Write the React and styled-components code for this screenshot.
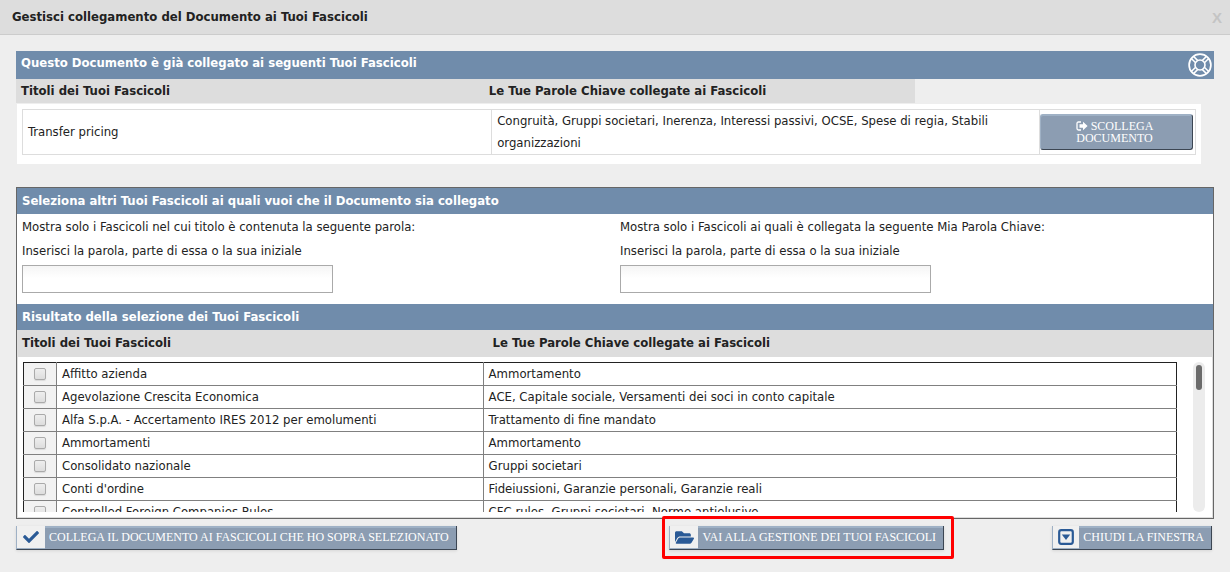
import React, { useState } from 'react';
import styled, { createGlobalStyle } from 'styled-components';
import { FaCheck, FaFolderOpen } from 'react-icons/fa';

const folders = [
    { title: "Affitto azienda", keywords: "Ammortamento" },
    { title: "Agevolazione Crescita Economica", keywords: "ACE, Capitale sociale, Versamenti dei soci in conto capitale" },
    { title: "Alfa S.p.A. - Accertamento IRES 2012 per emolumenti", keywords: "Trattamento di fine mandato" },
    { title: "Ammortamenti", keywords: "Ammortamento" },
    { title: "Consolidato nazionale", keywords: "Gruppi societari" },
    { title: "Conti d'ordine", keywords: "Fideiussioni, Garanzie personali, Garanzie reali" },
    { title: "Controlled Foreign Companies Rules", keywords: "CFC rules, Gruppi societari, Norme antielusive" },
];

const LifeRing = () => (
    <svg width="24" height="24" viewBox="0 0 24 24" fill="none" stroke="#fff" aria-hidden="true">
        <circle cx="12" cy="12" r="10.9" strokeWidth="1.7" />
        <circle cx="12" cy="12" r="5" strokeWidth="1.6" />
        <path strokeWidth="1.5" d="M5.8 3.6l4 4M3.6 5.8l4 4M18.2 3.6l-4 4M20.4 5.8l-4 4M5.8 20.4l4-4M3.6 18.2l4-4M18.2 20.4l-4-4M20.4 18.2l-4-4" />
    </svg>
);

const SignOut = () => (
    <svg width="12" height="10" viewBox="0 0 12 10" aria-hidden="true">
        <path d="M5 1H2.5Q1 1 1 2.5v5Q1 9 2.5 9H5" fill="none" stroke="currentColor" strokeWidth="1.3" />
        <path d="M3.5 3.3H7V.8L11.6 5 7 9.2V6.7H3.5z" fill="currentColor" />
    </svg>
);

const CaretSquare = () => (
    <svg width="16" height="16" viewBox="0 0 16 16" aria-hidden="true">
        <rect x="1.2" y="1.2" width="13.6" height="13.6" rx="2" fill="none" stroke="currentColor" strokeWidth="2.2" />
        <path d="M3.8 5.4h8.4L8 11z" fill="currentColor" />
    </svg>
);

const App = () => {

    const [checked, setChecked] = useState({});

    const toggle = (title) => setChecked({ ...checked, [title]: !checked[title] });

    return(
        <>
            <GlobalStyle />

            <TitleBar>
                <Title>Gestisci collegamento del Documento ai Tuoi Fascicoli</Title>
                <Close type="button" aria-label="Chiudi">X</Close>
            </TitleBar>

            <Content>

                <section>
                    <LinkedBar>
                        <Heading>Questo Documento è già collegato ai seguenti Tuoi Fascicoli</Heading>
                        <Help type="button" aria-label="Aiuto"><LifeRing /></Help>
                    </LinkedBar>
                    <LinkedHead>
                        <span>Titoli dei Tuoi Fascicoli</span>
                        <span>Le Tue Parole Chiave collegate ai Fascicoli</span>
                    </LinkedHead>
                    <LinkedBox>
                        <LinkedTable>
                            <TitleCol />
                            <col />
                            <ButtonCol />
                            <tbody>
                                <tr>
                                    <td>Transfer pricing</td>
                                    <td>Congruità, Gruppi societari, Inerenza, Interessi passivi, OCSE, Spese di regia, Stabili organizzazioni</td>
                                    <td>
                                        <Unlink type="button"><SignOut /> SCOLLEGA<br />DOCUMENTO</Unlink>
                                    </td>
                                </tr>
                            </tbody>
                        </LinkedTable>
                    </LinkedBox>
                </section>

                <Panel>
                    <Bar><Heading>Seleziona altri Tuoi Fascicoli ai quali vuoi che il Documento sia collegato</Heading></Bar>
                    <Filters>
                        <Filter>
                            <p>Mostra solo i Fascicoli nel cui titolo è contenuta la seguente parola:</p>
                            <label htmlFor="by-title">Inserisci la parola, parte di essa o la sua iniziale</label>
                            <input id="by-title" type="text" />
                        </Filter>
                        <Filter>
                            <p>Mostra solo i Fascicoli ai quali è collegata la seguente Mia Parola Chiave:</p>
                            <label htmlFor="by-keyword">Inserisci la parola, parte di essa o la sua iniziale</label>
                            <input id="by-keyword" type="text" />
                        </Filter>
                    </Filters>
                    <Bar><Heading>Risultato della selezione dei Tuoi Fascicoli</Heading></Bar>
                    <ResultHead>
                        <span>Titoli dei Tuoi Fascicoli</span>
                        <span>Le Tue Parole Chiave collegate ai Fascicoli</span>
                    </ResultHead>
                    <Results>
                        <Viewport>
                            <ResultTable>
                                <CheckCol />
                                <FolderCol />
                                <col />
                                <tbody>
                                    {folders.map((f) => (
                                        <tr key={f.title}>
                                            <td>
                                                <Check
                                                    aria-label={f.title}
                                                    checked={!!checked[f.title]}
                                                    onChange={() => toggle(f.title)}
                                                />
                                            </td>
                                            <td>{f.title}</td>
                                            <td>{f.keywords}</td>
                                        </tr>
                                    ))}
                                </tbody>
                            </ResultTable>
                        </Viewport>
                        <Track><Thumb /></Track>
                    </Results>
                </Panel>

                <Actions>
                    <div>
                        <Action type="button">
                            <IconCell $width="28px"><FaCheck /></IconCell>
                            <span>COLLEGA IL DOCUMENTO AI FASCICOLI CHE HO SOPRA SELEZIONATO</span>
                        </Action>
                    </div>
                    <ActionsRight>
                        <Highlight>
                            <Action type="button">
                                <IconCell $width="28px"><FaFolderOpen size={19} /></IconCell>
                                <span>VAI ALLA GESTIONE DEI TUOI FASCICOLI</span>
                            </Action>
                        </Highlight>
                        <Action type="button">
                            <IconCell $width="26px"><CaretSquare /></IconCell>
                            <span>CHIUDI LA FINESTRA</span>
                        </Action>
                    </ActionsRight>
                </Actions>

            </Content>
        </>
    );

};

export default App;

const fontStack = `"DejaVu Sans Condensed", "DejaVu Sans", sans-serif`;

const GlobalStyle = createGlobalStyle`

    * {
        box-sizing: border-box;
    }
    body {
        margin: 0;
        background-color: #eee;
        color: #222;
        font: 13px/22px ${fontStack};
    }
    p {
        margin: 0;
    }
    button {
        cursor: pointer;
    }

`;

const TitleBar = styled.header`

    display: flex;
    justify-content: space-between;
    align-items: center;
    height: 35px;
    padding: 0 8px 0 12px;
    background-color: #ddd;
    border-bottom: 1px solid #ccc;

`;

const Title = styled.h1`

    margin: 0;
    font-size: 13px;

`;

const Heading = styled.h2`

    margin: 0;
    font-size: 13px;

`;

const Close = styled.button`

    padding: 0;
    border: 0;
    background: none;
    color: #c4c4c4;
    font: bold 15px "Liberation Sans", sans-serif;

`;

const Content = styled.main`

    padding: 16px 16px 0;

`;

const Bar = styled.div`

    display: flex;
    justify-content: space-between;
    height: 26px;
    padding: 2px 5px;
    background-color: #708cab;
    color: #fff;

`;

const LinkedBar = styled(Bar)`

    height: 28px;
    padding: 1px 2px 2px 5px;

`;

const Help = styled.button`

    display: flex;
    padding: 1px 0 0;
    border: 0;
    background: none;

`;

const LinkedHead = styled.div`

    display: grid;
    grid-template-columns: 467fr 425fr;
    width: 75%;
    height: 24px;
    padding: 1px 0 0 5px;
    background-color: #ddd;
    font-weight: bold;

`;

const LinkedBox = styled.div`

    margin: 1px 13px 0 1px;
    padding: 5px 5px 9px;
    background-color: #fff;

`;

const LinkedTable = styled.table`

    width: 100%;
    table-layout: fixed;
    border-collapse: collapse;

    td {
        height: 45px;
        padding: 0 5px;
        border: 1px solid #ddd;
    }
    td:last-child {
        padding: 0 2px 0 0;
    }

`;

const TitleCol = styled.col`

    width: 40%;

`;

const ButtonCol = styled.col`

    width: 156px;

`;

const Unlink = styled.button`

    display: block;
    width: 100%;
    height: 36px;
    padding: 0 4px 0 0;
    border: 1px solid #3c4653;
    border-color: #9fb1c5 #3c4653 #3c4653 #9fb1c5;
    border-radius: 3px;
    background-color: #8c9db2;
    box-shadow: inset 0 1px 0 #9fb1c5;
    color: #fff;
    font: 12px/12px "Liberation Serif", serif;

    svg {
        vertical-align: -1px;
    }

`;

const Panel = styled.section`

    margin-top: 23px;
    border: 1px solid #666;
    background-color: #fff;

`;

const Filters = styled.div`

    display: grid;
    grid-template-columns: 1fr 1fr;
    padding: 2px 0 11px;

`;

const Filter = styled.div`

    display: flex;
    flex-direction: column;
    align-items: flex-start;
    gap: 2px;
    padding: 0 5px;

    input {
        width: 311px;
        max-width: 100%;
        height: 28px;
        margin-top: 1px;
        padding: 0 6px;
        border: 1px solid #aaa;
        background: linear-gradient(#f5f5f5, #fff 12px);
        font: inherit;
    }

`;

const ResultHead = styled.div`

    display: grid;
    grid-template-columns: 471fr 721fr;
    height: 27px;
    padding: 2px 0 0 5px;
    background-color: #ddd;
    font-weight: bold;

`;

const Results = styled.div`

    display: flex;
    justify-content: space-between;
    gap: 16px;
    padding: 5px 7px 5px 5px;
    border: 1px solid #ddd;
    border-top: 0;

`;

const Viewport = styled.div`

    flex: 1;
    height: 150px;
    overflow-y: auto;
    scrollbar-width: none;

`;

const ResultTable = styled.table`

    width: 100%;
    table-layout: fixed;
    border-collapse: collapse;
    border: 1px solid #222;

    td {
        height: 23px;
        padding: 0 5px;
        border: 1px solid #808080;
    }
    tr:first-child td {
        border-top-color: #222;
    }
    td:first-child {
        padding: 0;
        border-left-color: #222;
        background-color: #f2f2f2;
    }
    td:last-child {
        border-right-color: #222;
    }

`;

const CheckCol = styled.col`

    width: 33px;

`;

const FolderCol = styled.col`

    width: 37%;

`;

const Check = styled.input.attrs({ type: 'checkbox' })`

    appearance: none;
    display: block;
    width: 12px;
    height: 12px;
    margin: 0 auto;
    border: 1px solid #aaa;
    border-radius: 2px;
    background: linear-gradient(#eee, #ddd);
    box-shadow: 0 1px 1px rgba(0, 0, 0, 0.1);

    &:checked {
        background: #2a5a96;
    }

`;

const Track = styled.div`

    width: 12px;
    padding: 3px;
    border-radius: 6px;
    background-color: #ececec;

`;

const Thumb = styled.div`

    height: 25px;
    border-radius: 3px;
    background-color: #6b6b6b;

`;

const Actions = styled.footer`

    display: grid;
    grid-template-columns: 6fr 5fr;
    padding: 7px 0 16px;

`;

const ActionsRight = styled.div`

    display: flex;
    justify-content: space-between;
    padding-right: 2px;

`;

const Action = styled.button`

    display: flex;
    align-items: stretch;
    height: 24px;
    padding: 0 7px 0 0;
    border: 1px solid #3c4653;
    border-left-color: #9fb1c5;
    border-top: 0;
    background-color: #8c9db2;
    box-shadow: inset 0 2px 0 #9fb1c5, 0 1px 3px rgba(0, 0, 0, 0.1);
    color: #fff;
    font: 12px/23px "Liberation Serif", serif;
    white-space: nowrap;

`;

const IconCell = styled.span`

    display: flex;
    align-items: center;
    justify-content: center;
    width: ${(props) => props.$width};
    margin-right: 4px;
    border-bottom: 1px solid #9fb1c5;
    background-color: #f0f0f0;
    color: #2a5a96;
    font-size: 16px;

`;

/* red frame drawn around the button, over the panel edge */
const Highlight = styled.div`

    position: relative;

    &::after {
        content: "";
        position: absolute;
        inset: -10px -10px -9px -7px;
        border: 3px solid #f00;
        border-radius: 2px;
        pointer-events: none;
    }

`;
